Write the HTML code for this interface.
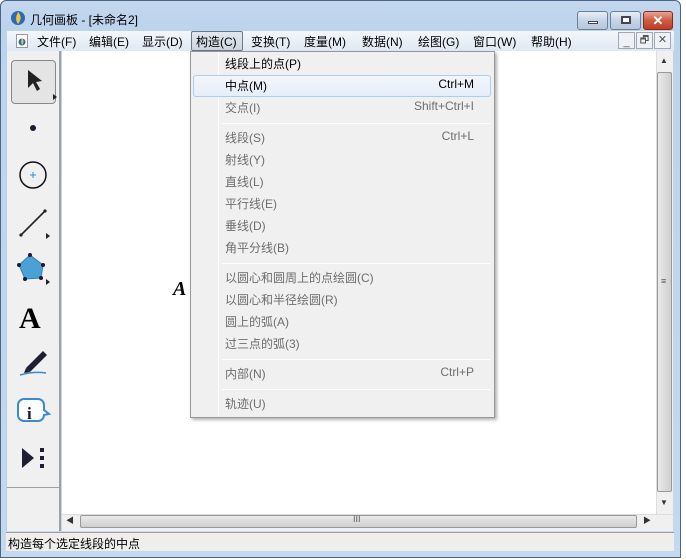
<!DOCTYPE html>
<html><head><meta charset="utf-8"><style>
*{margin:0;padding:0;box-sizing:border-box}
body{width:686px;height:560px;overflow:hidden;background:#fff;font-family:"Liberation Sans","Noto Sans CJK SC",sans-serif;font-size:12px;position:relative}
.abs{position:absolute}
#frame{left:0;top:0;width:681px;height:558px;background:linear-gradient(#c3d7ee,#bcd3ec 30px,#c4d9ef);border:1px solid #4b6585;border-radius:6px 6px 0 0}
.menu span{position:absolute;top:33px;color:#000}
.mi{position:absolute;left:225px;color:#6d6d6d;font-size:12px}
.sc{position:absolute;left:374px;width:100px;text-align:right;color:#6d6d6d}
.sep{position:absolute;left:222px;width:268px;height:1px;background:#d7d7d7;border-bottom:1px solid #fff}
.wb{position:absolute;top:11px;height:19px;border:1px solid #6a7f9b;border-radius:3px;background:linear-gradient(#e8eef6,#c6d4e6 50%,#b6c7dd)}
</style></head><body>
<div id="frame" class="abs"></div>
<svg class="abs" style="left:10px;top:10px" width="16" height="16"><circle cx="8" cy="8" r="7" fill="#2a6bb8"/><path d="M8 2 C11 5 12 9 8 14 C5 10 6 6 8 2Z" fill="#f5c23a"/></svg>
<div class="abs" style="left:30px;top:11px;font-size:12px">几何画板 - [未命名2]</div>
<div class="wb" style="left:577px;width:31px"><div style="position:absolute;left:10px;top:9px;width:10px;height:3px;background:#fff;border:1px solid #445"></div></div>
<div class="wb" style="left:610px;width:31px"><div style="position:absolute;left:10px;top:4px;width:10px;height:8px;border:2px solid #445;background:#fff"></div></div>
<div class="wb" style="left:643px;width:30px;background:linear-gradient(#e8a493,#cd5b43 50%,#c43b22);border-color:#7b2e22;color:#fff;font-weight:bold;text-align:center;line-height:17px;font-size:13px">✕</div>
<div class="abs" style="left:7px;top:31px;width:667px;height:20px;background:linear-gradient(#f4f7fb,#dfe8f3)"></div>
<svg class="abs" style="left:16px;top:34px" width="12" height="14"><rect x="0.5" y="0.5" width="11" height="13" fill="#fff" stroke="#999"/><circle cx="6" cy="8" r="3.5" fill="#2a6bb8"/><path d="M6 4 C8 6 8 9 6 11 C5 9 5 6 6 4Z" fill="#f5c23a"/></svg>
<div class="abs" style="left:191px;top:31px;width:52px;height:20px;border:1px solid #6d7787;border-radius:2px;background:linear-gradient(#e3e8ef,#cdd5df)"></div>
<div class="menu">
<span style="left:37px">文件(F)</span><span style="left:89px">编辑(E)</span><span style="left:142px">显示(D)</span><span style="left:196px">构造(C)</span><span style="left:251px">变换(T)</span><span style="left:304px">度量(M)</span><span style="left:362px">数据(N)</span><span style="left:418px">绘图(G)</span><span style="left:473px">窗口(W)</span><span style="left:531px">帮助(H)</span>
</div>
<div class="abs" style="left:618px;top:32px;width:17px;height:17px;border:1px solid #a0a8b4;background:#eef1f5;text-align:center;color:#555;font-size:11px;line-height:18px">_</div>
<div class="abs" style="left:636px;top:32px;width:17px;height:17px;border:1px solid #a0a8b4;background:#eef1f5;text-align:center;color:#555;font-size:10px;line-height:15px">🗗</div>
<div class="abs" style="left:654px;top:32px;width:17px;height:17px;border:1px solid #a0a8b4;background:#eef1f5;text-align:center;color:#555;font-size:11px;line-height:15px">✕</div>
<div class="abs" style="left:6px;top:51px;width:55px;height:480px;background:#f0f0f0;border-right:2px solid #a0a0a0;border-left:1px solid #b8d0ea"></div>
<div class="abs" style="left:7px;top:487px;width:53px;height:1px;background:#a0a0a0"></div>
<div class="abs" style="left:11px;top:60px;width:45px;height:44px;border:1px solid #888;border-radius:4px;background:#e4e4e4"></div>
<svg class="abs" style="left:6px;top:51px" width="55" height="430">
<path d="M22 19 L22 37 L27 32 L31 40 L34 38 L30 31 L36 30 Z" fill="#222"/><path d="M47 43 L47 49 L51 46Z" fill="#222"/>
<circle cx="27" cy="77" r="3" fill="#1a1a33"/>
<circle cx="27" cy="124" r="13" fill="none" stroke="#111" stroke-width="1.5"/><path d="M24 124h6M27 121v6" stroke="#3a8ad0" stroke-width="1"/>
<line x1="15" y1="184" x2="39" y2="160" stroke="#222" stroke-width="1.6"/><circle cx="15" cy="184" r="1.6" fill="#222"/><circle cx="39" cy="160" r="1.6" fill="#222"/><path d="M40 182v6l4-3z" fill="#222"/>
<path d="M24 204 L37 214 L35 227 L19 228 L13 214Z" fill="#4ba0d6" stroke="#357fb8"/><g fill="#1a1a33"><circle cx="24" cy="204" r="2"/><circle cx="37" cy="214" r="2"/><circle cx="35" cy="227" r="2"/><circle cx="19" cy="228" r="2"/><circle cx="13" cy="214" r="2"/></g><path d="M40 228v6l4-3z" fill="#222"/>
<text x="13" y="277" font-family="Liberation Serif" font-weight="bold" font-size="30" fill="#000">A</text>
<path d="M20 317 L37 300 L41 304 L24 321 Z" fill="#1e1e33"/><path d="M20 317 L18 322 L24 321Z" fill="#1e1e33"/><path d="M14 324 Q28 320 40 322" stroke="#3a8ad0" fill="none" stroke-width="1.5"/>
<path d="M18 348 h14 a6 6 0 0 1 6 6 v5 l5 4 l-5 1 a6 6 0 0 1 -6 6 h-14 a6 6 0 0 1 -6 -6 v-10 a6 6 0 0 1 6 -6z" fill="#fff" stroke="#3a8ad0" stroke-width="2"/><text x="21" y="368" font-family="Liberation Serif" font-weight="bold" font-size="17" fill="#1a1a33">i</text>
<path d="M16 397 L16 417 L28 407Z" fill="#1e1e33"/><rect x="34" y="397" width="4" height="4" fill="#1e1e33"/><rect x="34" y="405" width="4" height="4" fill="#1e1e33"/><rect x="34" y="413" width="4" height="4" fill="#1e1e33"/>
</svg>
<div class="abs" style="left:62px;top:51px;width:595px;height:463px;background:#fff"></div>
<div class="abs" style="left:173px;top:278px;font-family:'Liberation Serif';font-style:italic;font-weight:bold;font-size:20px">A</div>
<div class="abs" style="left:656px;top:51px;width:17px;height:463px;background:#f0f0f0;border-left:1px solid #ddd"></div>
<div class="abs" style="left:660px;top:56px;font-size:8px;color:#333">▲</div>
<div class="abs" style="left:657px;top:72px;width:15px;height:420px;border:1px solid #999;border-radius:2px;background:linear-gradient(90deg,#eaeaea,#dcdcdc 50%,#cfcfcf)"></div>
<div class="abs" style="left:661px;top:276px;font-size:9px;color:#555">≡</div>
<div class="abs" style="left:660px;top:498px;font-size:8px;color:#333">▼</div>
<div class="abs" style="left:62px;top:514px;width:611px;height:17px;background:#f0f0f0;border-top:1px solid #ddd"></div>
<div class="abs" style="left:66px;top:515px;font-size:8px;color:#333">◀</div>
<div class="abs" style="left:80px;top:515px;width:557px;height:13px;border:1px solid #999;border-radius:2px;background:linear-gradient(#eaeaea,#dcdcdc 50%,#cfcfcf)"></div>
<div class="abs" style="left:353px;top:514px;font-size:9px;color:#555">III</div>
<div class="abs" style="left:643px;top:515px;font-size:8px;color:#333">▶</div>
<div class="abs" style="left:6px;top:532px;width:668px;height:19px;background:#f0eeed;border-top:1px solid #a0a0a0"></div>
<div class="abs" style="left:8px;top:535px;font-size:12px">构造每个选定线段的中点</div>
<div class="abs" style="left:190px;top:51px;width:305px;height:367px;background:#f0f0f0;border:1px solid #979797;box-shadow:2px 2px 3px rgba(0,0,0,.3)"></div>
<div class="abs" style="left:218px;top:52px;width:1px;height:364px;background:#e2e3e3;border-right:1px solid #fff"></div>
<div class="abs" style="left:193px;top:75px;width:298px;height:22px;border:1px solid #aeccec;border-radius:3px;background:linear-gradient(#f2f6fc,#e6eef9)"></div>
<div class="mi" style="top:55px;color:#000">线段上的点(P)</div>
<div class="mi" style="top:77px;color:#000">中点(M)</div><div class="sc" style="top:77px;color:#000">Ctrl+M</div>
<div class="mi" style="top:99px">交点(I)</div><div class="sc" style="top:99px">Shift+Ctrl+I</div>
<div class="sep" style="top:123px"></div>
<div class="mi" style="top:129px">线段(S)</div><div class="sc" style="top:129px">Ctrl+L</div>
<div class="mi" style="top:151px">射线(Y)</div>
<div class="mi" style="top:173px">直线(L)</div>
<div class="mi" style="top:195px">平行线(E)</div>
<div class="mi" style="top:217px">垂线(D)</div>
<div class="mi" style="top:239px">角平分线(B)</div>
<div class="sep" style="top:263px"></div>
<div class="mi" style="top:269px">以圆心和圆周上的点绘圆(C)</div>
<div class="mi" style="top:291px">以圆心和半径绘圆(R)</div>
<div class="mi" style="top:313px">圆上的弧(A)</div>
<div class="mi" style="top:335px">过三点的弧(3)</div>
<div class="sep" style="top:359px"></div>
<div class="mi" style="top:365px">内部(N)</div><div class="sc" style="top:365px">Ctrl+P</div>
<div class="sep" style="top:389px"></div>
<div class="mi" style="top:395px">轨迹(U)</div>
</body></html>
